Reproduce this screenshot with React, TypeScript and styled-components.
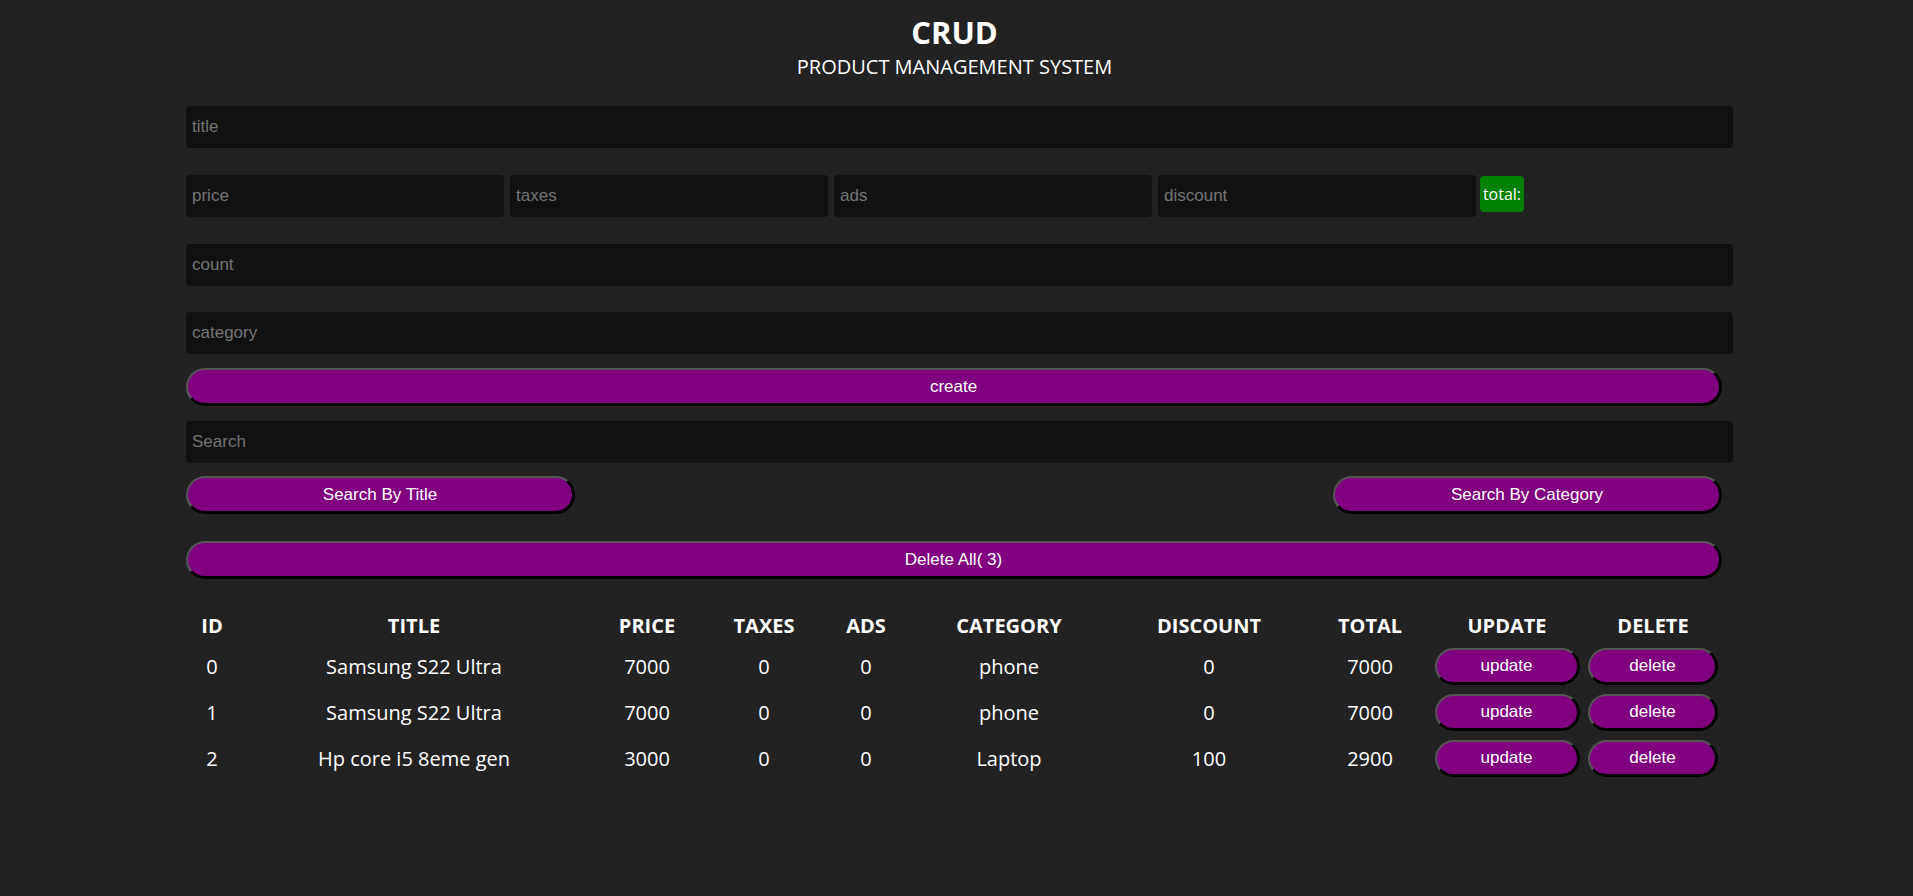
import React from "react";
import styled, { createGlobalStyle } from "styled-components";

const GlobalStyle = createGlobalStyle`
  * { box-sizing: border-box; }
  html, body { margin: 0; padding: 0; background: #222222; }
  body {
    color: #ffffff;
    font-family: "Open Sans", "Noto Sans", sans-serif;
    min-height: 896px;
  }
`;

const Page = styled.div`
  width: 1547px;
  margin-left: 186px;
  display: flex;
  flex-direction: column;
`;

const Header = styled.header`
  display: flex;
  flex-direction: column;
  align-items: center;
  padding-top: 12px;
  padding-right: 10px;
`;

const Title = styled.h1`
  margin: 0;
  font-size: 31px;
  line-height: 40px;
  font-weight: 700;
  font-family: "Open Sans", sans-serif;
`;

const Subtitle = styled.h2`
  margin: 2px 0 0;
  font-size: 20px;
  line-height: 26px;
  font-weight: 400;
  font-family: "Open Sans", sans-serif;
`;

const Input = styled.input<{ $mt?: number; $w?: number }>`
  display: block;
  width: ${(p) => (p.$w ? `${p.$w}px` : "100%")};
  height: 42px;
  margin-top: ${(p) => p.$mt ?? 0}px;
  padding: 0 6px;
  background: #111111;
  border: none;
  border-radius: 4px;
  outline: none;
  color: #ffffff;
  font-family: "Liberation Sans", Arial, sans-serif;
  font-size: 17px;
  &::placeholder { color: #757575; }
`;

const PriceRow = styled.div`
  display: flex;
  align-items: center;
  gap: 6px;
  margin-top: 27px;
`;

const TotalBadge = styled.small`
  display: flex;
  align-items: center;
  justify-content: center;
  width: 44px;
  height: 36px;
  margin-left: -2px;
  margin-top: -5px;
  background: #008000;
  border-radius: 4px;
  font-family: "Open Sans", sans-serif;
  font-size: 16px;
  color: #ffffff;
`;

const PillButton = styled.button<{ $mt?: number; $w?: string }>`
  display: block;
  width: ${(p) => p.$w ?? "1536px"};
  height: 38px;
  margin-top: ${(p) => p.$mt ?? 0}px;
  background: #800080;
  color: #ffffff;
  border-style: solid;
  border-width: 2px 3px 3px 2px;
  border-color: #555555 #000000 #000000 #555555;
  border-radius: 19px;
  font-family: "Liberation Sans", Arial, sans-serif;
  font-size: 17px;
  cursor: pointer;
  padding: 0;
`;

const SearchRow = styled.div`
  display: flex;
  justify-content: space-between;
  width: 1536px;
  margin-top: 13px;
`;

const Table = styled.table`
  margin-top: 28px;
  border-collapse: collapse;
  table-layout: fixed;
  width: 1538px;
  font-family: "Open Sans", sans-serif;
  font-size: 20px;
`;

const Th = styled.th`
  height: 36px;
  padding: 0;
  font-weight: 700;
  text-align: center;
  font-size: 20px;
`;

const Td = styled.td`
  height: 46px;
  padding: 0;
  text-align: center;
`;

const RowButton = styled.button<{ $w: number }>`
  width: ${(p) => p.$w}px;
  height: 37px;
  background: #800080;
  color: #ffffff;
  border-style: solid;
  border-width: 2px 3px 3px 2px;
  border-color: #555555 #000000 #000000 #555555;
  border-radius: 19px;
  font-family: "Liberation Sans", Arial, sans-serif;
  font-size: 17px;
  padding: 0;
  cursor: pointer;
  vertical-align: middle;
`;

const columns = [
  { label: "ID", w: 52 },
  { label: "TITLE", w: 352 },
  { label: "PRICE", w: 114 },
  { label: "TAXES", w: 120 },
  { label: "ADS", w: 84 },
  { label: "CATEGORY", w: 202 },
  { label: "DISCOUNT", w: 198 },
  { label: "TOTAL", w: 124 },
  { label: "UPDATE", w: 150 },
  { label: "DELETE", w: 142 },
];

const products = [
  { id: 0, title: "Samsung S22 Ultra", price: 7000, taxes: 0, ads: 0, category: "phone", discount: 0, total: 7000 },
  { id: 1, title: "Samsung S22 Ultra", price: 7000, taxes: 0, ads: 0, category: "phone", discount: 0, total: 7000 },
  { id: 2, title: "Hp core i5 8eme gen", price: 3000, taxes: 0, ads: 0, category: "Laptop", discount: 100, total: 2900 },
];

export default function App() {
  return (
    <>
      <GlobalStyle />
      <Page>
        <Header>
          <Title>CRUD</Title>
          <Subtitle>PRODUCT MANAGEMENT SYSTEM</Subtitle>
        </Header>
        <Input placeholder="title" $mt={26} />
        <PriceRow>
          <Input placeholder="price" $w={318} />
          <Input placeholder="taxes" $w={318} />
          <Input placeholder="ads" $w={318} />
          <Input placeholder="discount" $w={318} />
          <TotalBadge>total:</TotalBadge>
        </PriceRow>
        <Input placeholder="count" $mt={27} />
        <Input placeholder="category" $mt={26} />
        <PillButton $mt={14}>create</PillButton>
        <Input placeholder="Search" $mt={15} />
        <SearchRow>
          <PillButton $w="389px">Search By Title</PillButton>
          <PillButton $w="389px">Search By Category</PillButton>
        </SearchRow>
        <PillButton $mt={27}>Delete All( 3)</PillButton>
        <Table>
          <colgroup>
            {columns.map((c) => (
              <col key={c.label} style={{ width: c.w }} />
            ))}
          </colgroup>
          <thead>
            <tr>
              {columns.map((c) => (
                <Th key={c.label}>{c.label}</Th>
              ))}
            </tr>
          </thead>
          <tbody>
            {products.map((p) => (
              <tr key={p.id}>
                <Td>{p.id}</Td>
                <Td>{p.title}</Td>
                <Td>{p.price}</Td>
                <Td>{p.taxes}</Td>
                <Td>{p.ads}</Td>
                <Td>{p.category}</Td>
                <Td>{p.discount}</Td>
                <Td>{p.total}</Td>
                <Td><RowButton $w={145}>update</RowButton></Td>
                <Td><RowButton $w={130}>delete</RowButton></Td>
              </tr>
            ))}
          </tbody>
        </Table>
      </Page>
    </>
  );
}
